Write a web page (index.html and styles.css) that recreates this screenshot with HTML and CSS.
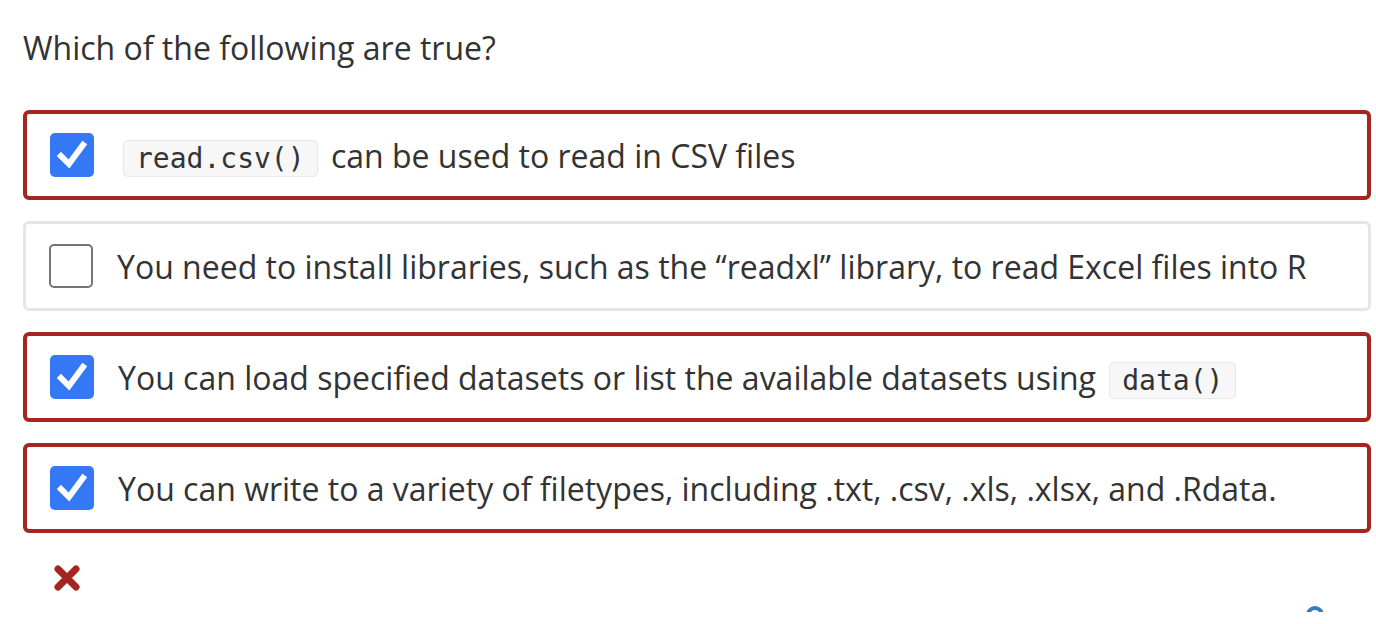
FILE: index.html
```html
<!DOCTYPE html>
<html lang="en">
<head>
<meta charset="UTF-8">
<meta name="viewport" content="width=device-width, initial-scale=1.0">
<title>Quiz</title>
<link rel="stylesheet" href="styles.css">
</head>
<body>
  <div class="question-container">
    <div class="question-text">Which of the following are true?</div>

    <div class="answers">
      <label class="answer incorrect">
        <span class="check checked">
          <svg viewBox="0 0 44 44" width="44" height="44"><path d="M11 23 L19 31 L33 12" fill="none" stroke="#fff" stroke-width="6" stroke-linecap="square"/></svg>
        </span>
        <span class="answer-text"><code>read.csv()</code> can be used to read in CSV files</span>
      </label>

      <label class="answer">
        <span class="check"></span>
        <span class="answer-text">You need to install libraries, such as the “readxl” library, to read Excel files into R</span>
      </label>

      <label class="answer incorrect">
        <span class="check checked">
          <svg viewBox="0 0 44 44" width="44" height="44"><path d="M11 23 L19 31 L33 12" fill="none" stroke="#fff" stroke-width="6" stroke-linecap="square"/></svg>
        </span>
        <span class="answer-text">You can load specified datasets or list the available datasets using <code>data()</code></span>
      </label>

      <label class="answer incorrect">
        <span class="check checked">
          <svg viewBox="0 0 44 44" width="44" height="44"><path d="M11 23 L19 31 L33 12" fill="none" stroke="#fff" stroke-width="6" stroke-linecap="square"/></svg>
        </span>
        <span class="answer-text">You can write to a variety of filetypes, including .txt, .csv, .xls, .xlsx, and .Rdata.</span>
      </label>
    </div>

    <div class="feedback">
      <svg viewBox="0 0 28 28" width="28" height="28"><path d="M5 5 L23 23 M23 5 L5 23" stroke="#a52520" stroke-width="7" stroke-linecap="round"/></svg>
    </div>

    <div class="footer">
      <span class="footer-icon"></span>
    </div>
  </div>
</body>
</html>
```

FILE: styles.css
```css
body {
  margin: 0;
  padding: 0;
  font-family: "Open Sans", Arial, sans-serif;
  color: #333;
  background: #fff;
}
.question-container {
  padding: 26px 5px 0 23px;
}
.question-text {
  font-size: 32px;
  line-height: 44px;
  margin-bottom: 40px;
}
.answers {
  display: flex;
  flex-direction: column;
  gap: 21px;
}
.answer {
  display: flex;
  align-items: center;
  height: 90px;
  box-sizing: border-box;
  padding: 0 23px;
  border: 3px solid #e6e6e6;
  border-radius: 6px;
  font-size: 32px;
}
.incorrect {
  border: 4px solid #a52520;
}
.check {
  flex: none;
  width: 44px;
  height: 44px;
  box-sizing: border-box;
  border: 2px solid #747474;
  border-radius: 5px;
  margin-right: 24px;
  background: #fff;
}
.checked {
  border: none;
  background: #3478f6;
}
.check svg {
  display: block;
}
.answer-text {
  white-space: nowrap;
}
code {
  font-family: "DejaVu Sans Mono", "Liberation Mono", monospace;
  font-size: 28px;
  background: #f7f7f7;
  border: 1px solid #e8e8e8;
  border-radius: 5px;
  padding: 1px 12px;
  margin: 0 5px;
}
.feedback {
  padding: 31px 0 0 30px;
}
.feedback svg {
  display: block;
}
.footer {
  position: relative;
  height: 20px;
}
.footer-icon {
  position: absolute;
  left: 1283px;
  top: 14px;
  width: 18px;
  height: 18px;
  border: 4px solid #337ab7;
  border-radius: 50%;
  box-sizing: border-box;
}
```
